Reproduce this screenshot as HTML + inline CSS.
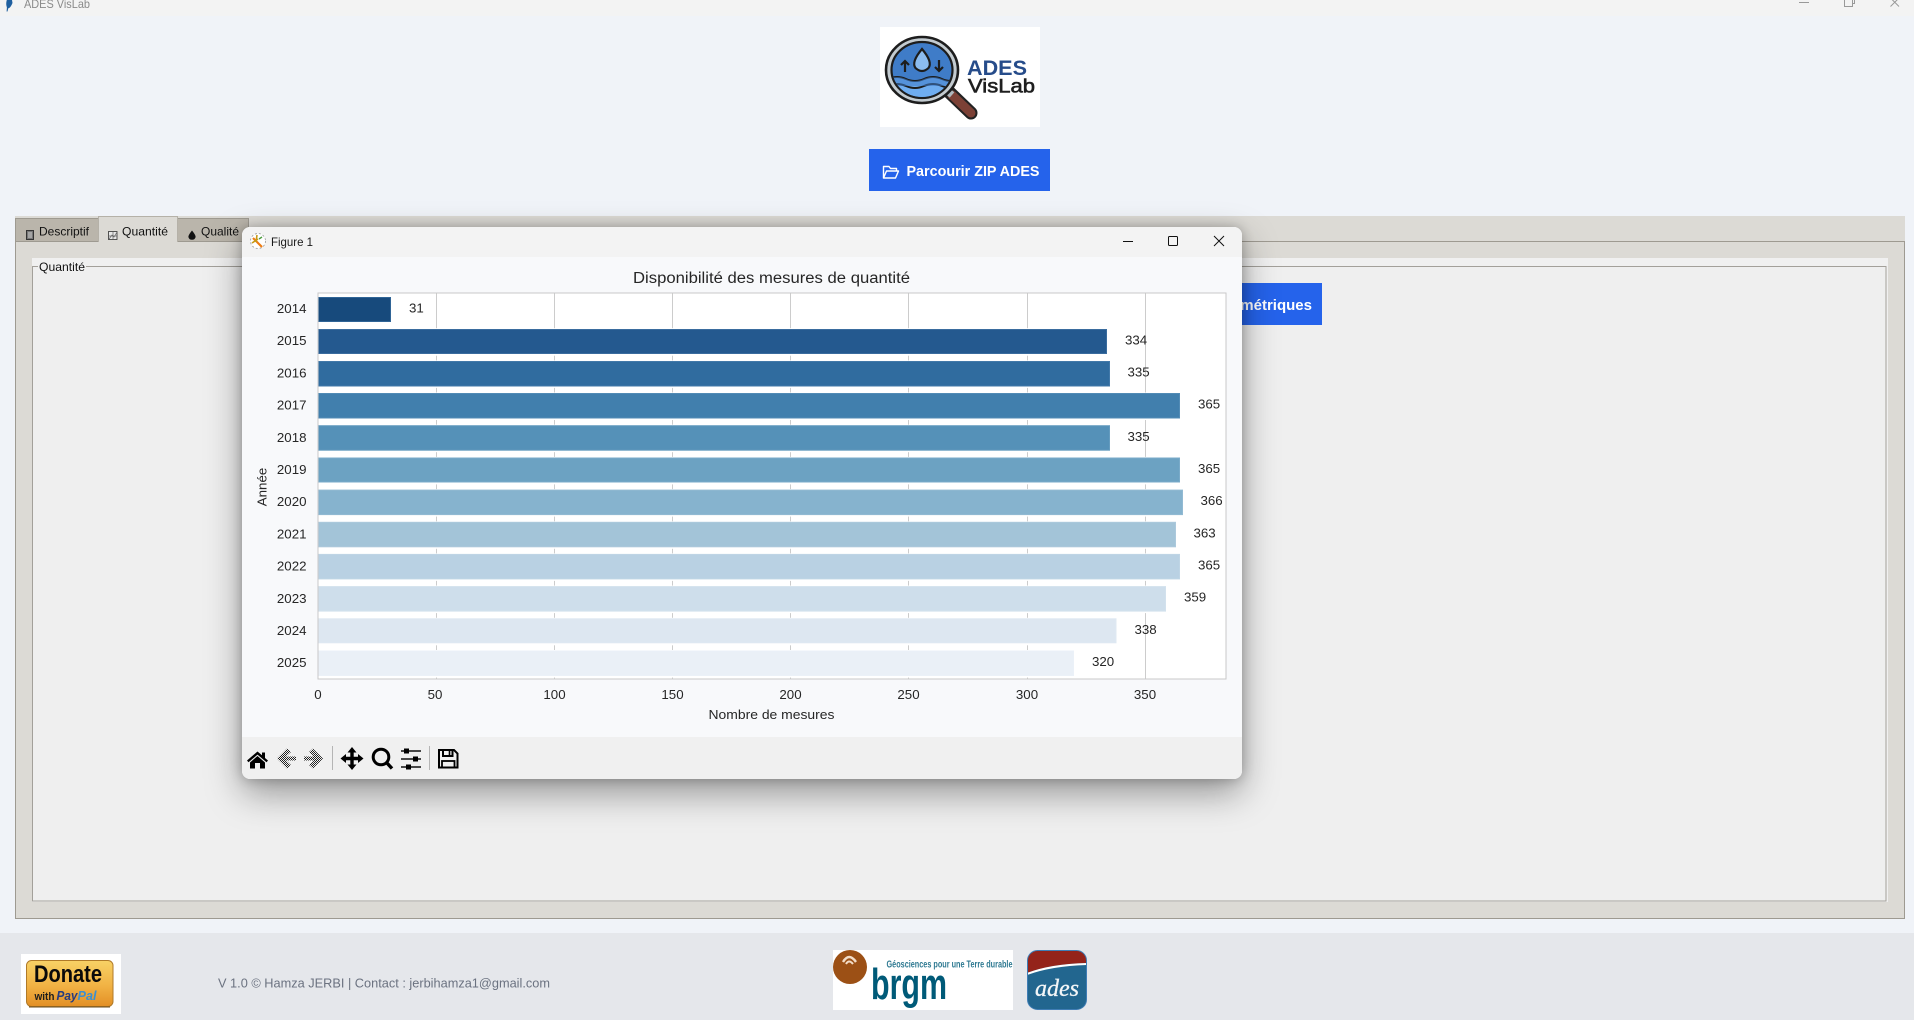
<!DOCTYPE html>
<html lang="fr">
<head>
<meta charset="utf-8">
<title>ADES VisLab</title>
<style>
html,body{margin:0;padding:0;width:1914px;height:1020px;overflow:hidden;background:#f0f3f8;}
svg{position:absolute;left:0;top:0;display:block;}
text{font-family:"Liberation Sans",Arial,sans-serif;}
#win{position:absolute;left:242px;top:227px;width:1000px;height:552px;border-radius:8px;background:#f8f9fb;box-shadow:0 14px 36px rgba(0,0,0,.38),0 0 12px rgba(0,0,0,.24);overflow:hidden;}
#win svg{left:0;top:0;}
</style>
</head>
<body>
<svg width="1914" height="1020" viewBox="0 0 1914 1020">
  <rect width="1914" height="1020" fill="#f0f3f8"/>
  <!-- title bar -->
  <rect width="1914" height="16" fill="#f3f3f3"/>
  <path d="M12 0 L12.5 3 Q10.5 8 8.3 8.3 L7.5 11.5 L6.6 11.5 L6.9 7.5 Q5.6 4 6.8 0Z" fill="#1f5f9f"/>
  <text x="24" y="8" font-size="12" fill="#8a8a8a" textLength="66" lengthAdjust="spacingAndGlyphs">ADES VisLab</text>
  <path d="M1799 2.5H1809" stroke="#999" stroke-width="1"/>
  <path d="M1844.5 -2V6.5H1852.5V-2M1852.5 3.5H1854.5V-3" fill="none" stroke="#999" stroke-width="1"/>
  <path d="M1890.5 -2L1899 6.5M1899 -2L1890.5 6.5" fill="none" stroke="#999" stroke-width="1"/>

  <!-- logo -->
  <rect x="880" y="27" width="160" height="100" fill="#fff"/>
  <path d="M948 91L971 113" stroke="#222" stroke-width="13" stroke-linecap="round"/>
  <path d="M952 95L971 113" stroke="#7c4136" stroke-width="9" stroke-linecap="round"/>
  <path d="M944 88L952 95" stroke="#aeb8bd" stroke-width="7"/>
  <ellipse cx="922" cy="70" rx="36" ry="33" fill="#c3cbd0" stroke="#1d1d1d" stroke-width="2.6"/>
  <ellipse cx="922" cy="70" rx="30.5" ry="28" fill="#3f7cc8" stroke="#1d1d1d" stroke-width="2.2"/>
  <clipPath id="lens"><ellipse cx="922" cy="70" rx="29.4" ry="27"/></clipPath>
  <g clip-path="url(#lens)">
    <path d="M888 79Q897 75 906 79T924 79T942 79T960 79V100H888Z" fill="#6fadf0" stroke="#1d1d1d" stroke-width="2"/>
    <path d="M888 86Q897 82 906 86T924 86T942 86T960 86" fill="none" stroke="#1d1d1d" stroke-width="2"/>
    <path d="M888 79Q897 75 906 79T924 79T942 79T960 79V86H888Z" fill="#3f7cc8" opacity=".55"/>
  </g>
  <path d="M922 49Q933 62 928.5 68Q922 74 915.5 68Q911 62 922 49Z" fill="#8bbcf0" stroke="#1d1d1d" stroke-width="2.2"/>
  <path d="M905 72V61M901 65L905 61L909 65" fill="none" stroke="#1d1d1d" stroke-width="2.2"/>
  <path d="M939 60V71M935 67L939 71L943 67" fill="none" stroke="#1d1d1d" stroke-width="2.2"/>
  <text x="967" y="75" font-size="21" font-weight="700" fill="#264c8a" textLength="60" lengthAdjust="spacingAndGlyphs">ADES</text>
  <text x="968" y="92.5" font-size="19" fill="#1f1f1f" font-weight="400" stroke="#1f1f1f" stroke-width=".6" textLength="67" lengthAdjust="spacingAndGlyphs">VisLab</text>

  <!-- main button -->
  <rect x="869" y="149" width="181" height="42" fill="#2563eb"/>
  <path d="M883.5 178V166.5H889L890.5 168.5H896.5V171M883.5 178H895.5L898.5 171H886.5Z" fill="none" stroke="#fff" stroke-width="1.4" stroke-linejoin="round"/>
  <text x="906.5" y="176" font-size="15" font-weight="700" fill="#fff" textLength="133" lengthAdjust="spacingAndGlyphs">Parcourir ZIP ADES</text>

  <!-- notebook -->
  <rect x="15" y="216" width="1890" height="703" fill="#dcdad5"/>
  <path d="M15.5 242V918.5H1904.5V241.5H178" fill="none" stroke="#9e9a91" stroke-width="1"/>
  <!-- tabs -->
  <rect x="15.5" y="218.5" width="83" height="23" fill="#bab5ab" stroke="#9e9a91"/>
  <rect x="177.5" y="218.5" width="71" height="23" fill="#bab5ab" stroke="#9e9a91"/>
  <path d="M98.5 242V216.5H177.5V242" fill="#dcdad5" stroke="#b5b1a8"/>
  <!-- tab icons -->
  <rect x="26.5" y="230.5" width="7" height="9" fill="#777" stroke="#333" stroke-width="1"/>
  <path d="M28 233H32M28 235H32M28 237H32" stroke="#eee" stroke-width=".8"/>
  <rect x="108.5" y="231.5" width="8.5" height="8" fill="#e8e8e8" stroke="#444" stroke-width=".9"/>
  <path d="M109 239L112 235L114 237L117 232M113 232V239M109 236H117" fill="none" stroke="#666" stroke-width=".7"/>
  <path d="M192 230.5Q196 235.5 195.6 237Q195 239.8 192 239.8Q189 239.8 188.4 237Q188 235.5 192 230.5Z" fill="#111"/>
  <text x="39" y="235.5" font-size="12" fill="#111" textLength="50" lengthAdjust="spacingAndGlyphs">Descriptif</text>
  <text x="122" y="235.5" font-size="12" fill="#111" textLength="46" lengthAdjust="spacingAndGlyphs">Quantité</text>
  <text x="201" y="235.5" font-size="12" fill="#111" textLength="38" lengthAdjust="spacingAndGlyphs">Qualité</text>
  <!-- labelframe -->
  <rect x="32" y="258" width="1856" height="644" fill="#f0f0f0"/>
  <rect x="32.5" y="266.5" width="1853.5" height="634.5" fill="#efefef" stroke="#a3a09a" stroke-width="1"/>
  <rect x="38" y="260" width="48" height="12" fill="#f0f0f0"/>
  <text x="39" y="271" font-size="12" fill="#111" textLength="46" lengthAdjust="spacingAndGlyphs">Quantité</text>
  <!-- hidden button -->
  <rect x="1100" y="283" width="222" height="42" fill="#2563eb"/>
  <text x="1312" y="310" font-size="15" font-weight="700" fill="#fff" text-anchor="end">métriques</text>

  <!-- footer -->
  <rect x="0" y="933" width="1914" height="87" fill="#e5e7eb"/>
  <rect x="21" y="954" width="100" height="60" fill="#fff"/>
  <defs>
    <linearGradient id="dg" x1="0" y1="0" x2="0" y2="1">
      <stop offset="0" stop-color="#f8d266"/><stop offset=".55" stop-color="#f1b244"/><stop offset="1" stop-color="#e38f25"/>
    </linearGradient>
  </defs>
  <rect x="26.5" y="960.5" width="86.5" height="46" rx="5" fill="url(#dg)" stroke="#b07a28"/>
  <path d="M29 1007H110" stroke="#6a4a18" stroke-width="1"/>
  <text x="34" y="982" font-size="24" font-weight="700" fill="#0a0a0a" textLength="68" lengthAdjust="spacingAndGlyphs">Donate</text>
  <text x="34.5" y="1000" font-size="11" font-weight="700" fill="#1c1c1c" textLength="20" lengthAdjust="spacingAndGlyphs">with</text>
  <text x="56.5" y="1000" font-size="13" font-weight="700" font-style="italic" fill="#253b80" textLength="21" lengthAdjust="spacingAndGlyphs">Pay</text>
  <text x="77.5" y="1000" font-size="13" font-weight="700" font-style="italic" fill="#3c8fd0" textLength="19" lengthAdjust="spacingAndGlyphs">Pal</text>
  <text x="218" y="987.5" font-size="13" fill="#6b7280" textLength="332" lengthAdjust="spacingAndGlyphs">V 1.0 © Hamza JERBI | Contact : jerbihamza1@gmail.com</text>
  <!-- brgm -->
  <rect x="833" y="950" width="180" height="60" fill="#fff"/>
  <circle cx="850" cy="967" r="17" fill="#9c5015"/>
  <path d="M843 962Q849 952 856 962" fill="none" stroke="#f3ddc8" stroke-width="2.4"/>
  <path d="M846 964Q849 959 853 964" fill="none" stroke="#f3ddc8" stroke-width="2"/>
  <text x="886.5" y="967.5" font-size="10" font-weight="700" fill="#2f7a92" textLength="126" lengthAdjust="spacingAndGlyphs">Géosciences pour une Terre durable</text>
  <text x="871" y="999" font-size="44" font-weight="700" fill="#005a78" textLength="76" lengthAdjust="spacingAndGlyphs">brgm</text>
  <!-- ades -->
  <clipPath id="ad"><rect x="1027.5" y="950.5" width="59" height="59" rx="10"/></clipPath>
  <g clip-path="url(#ad)">
    <rect x="1027" y="950" width="60" height="60" fill="#22668f"/>
    <path d="M1027 950H1087V963Q1050 964 1027 973Z" fill="#94231a"/>
    <path d="M1027 973Q1050 964 1087 963V965Q1052 966 1027 975Z" fill="#fff"/>
  </g>
  <rect x="1027.5" y="950.5" width="59" height="59" rx="10" fill="none" stroke="#3f7db5" stroke-width="1"/>
  <text x="1035" y="996" font-size="24" font-weight="400" font-style="italic" fill="#f2f5f7" stroke="#f2f5f7" stroke-width=".3" style="font-family:'Liberation Serif',serif" textLength="44" lengthAdjust="spacingAndGlyphs">ades</text>
</svg>

<div id="win">
<svg width="1000" height="552" viewBox="242 227 1000 552">
  <defs>
    <pattern id="dith" width="2" height="2" patternUnits="userSpaceOnUse">
      <rect width="2" height="2" fill="#f0f0f0"/>
      <rect width="1" height="1" fill="#222"/>
      <rect x="1" y="1" width="1" height="1" fill="#222"/>
    </pattern>
  </defs>
  <rect x="242" y="227" width="1000" height="30" fill="#f3f3f3"/>
  <rect x="242" y="257" width="1000" height="480" fill="#f8f9fb"/>
  <rect x="242" y="737" width="1000" height="42" fill="#f0f0f0"/>
  <!-- fig icon -->
  <circle cx="258" cy="241" r="7.5" fill="#fff" stroke="#999" stroke-width=".8" stroke-dasharray="2 2"/>
  <path d="M253 238L262 247" stroke="#ee7d14" stroke-width="2.2"/>
  <path d="M257 235L256 242M252 243L258 239" stroke="#c59a16" stroke-width="1.6"/>
  <path d="M259 239L262 237" stroke="#4a9c3c" stroke-width="1.4"/>
  <text x="271" y="246" font-size="12" fill="#1a1a1a" textLength="42" lengthAdjust="spacingAndGlyphs">Figure 1</text>
  <!-- caption -->
  <path d="M1123 241.5H1133" stroke="#111" stroke-width="1"/>
  <rect x="1168.5" y="236.5" width="9" height="9" rx="1" fill="none" stroke="#111" stroke-width="1"/>
  <path d="M1214 236L1224 246M1224 236L1214 246" stroke="#111" stroke-width="1"/>

  <!-- chart -->
  <text x="771.5" y="283" font-size="15.5" fill="#262626" text-anchor="middle" textLength="277" lengthAdjust="spacingAndGlyphs">Disponibilité des mesures de quantité</text>
  <rect x="318" y="293" width="908" height="386" fill="#fff"/>
  <g stroke="#cccccc" stroke-width="1">
    <path d="M436.5 293V679M554.5 293V679M672.5 293V679M790.5 293V679M908.5 293V679M1027.5 293V679M1145.5 293V679"/>
  </g>
  <g>
    <rect x="318" y="296" width="73" height="27.5" fill="#fff"/>
    <rect x="318" y="328.2" width="789" height="27.5" fill="#fff"/>
    <rect x="318" y="360.4" width="792" height="27.5" fill="#fff"/>
    <rect x="318" y="392.5" width="862" height="27.5" fill="#fff"/>
    <rect x="318" y="424.7" width="792" height="27.5" fill="#fff"/>
    <rect x="318" y="456.9" width="862" height="27.5" fill="#fff"/>
    <rect x="318" y="489.1" width="865" height="27.5" fill="#fff"/>
    <rect x="318" y="521.3" width="858" height="27.5" fill="#fff"/>
    <rect x="318" y="553.4" width="862" height="27.5" fill="#fff"/>
    <rect x="318" y="585.6" width="848" height="27.5" fill="#fff"/>
    <rect x="318" y="617.8" width="798.5" height="27.5" fill="#fff"/>
    <rect x="318" y="650" width="756" height="27.5" fill="#fff"/>
  </g>
  <g stroke-width="1">
    <rect x="318.5" y="297.5" width="72" height="24" fill="#174a7c" stroke="#2f6496"/>
    <rect x="318.5" y="329.5" width="788" height="24" fill="#24598f" stroke="#3a6c9e"/>
    <rect x="318.5" y="361.5" width="791" height="24.5" fill="#306c9f" stroke="#4279a9"/>
    <rect x="318.5" y="393.5" width="861" height="24.5" fill="#417fad" stroke="#528bb5"/>
    <rect x="318.5" y="425.7" width="791" height="24.5" fill="#5591b8" stroke="#659cbf"/>
    <rect x="318.5" y="458" width="861" height="24" fill="#6ca2c2" stroke="#7aabc9"/>
    <rect x="318.5" y="490.1" width="864" height="24.5" fill="#86b3ce" stroke="#92bad3"/>
    <rect x="318.5" y="522.3" width="857" height="24.5" fill="#a3c4d8" stroke="#acc9dc"/>
    <rect x="318.5" y="554.4" width="861" height="24.5" fill="#b9d1e3" stroke="#bfd5e5"/>
    <rect x="318.5" y="586.6" width="847" height="24.5" fill="#cedeeb" stroke="#d2e1ed"/>
    <rect x="318.5" y="618.8" width="797.5" height="24" fill="#dde7f1" stroke="#dfe8f2"/>
    <rect x="318.5" y="651" width="755" height="24.5" fill="#eaf0f7" stroke="#ebf1f8"/>
  </g>
  <rect x="318" y="293" width="908" height="386" fill="none" stroke="#c8c8c8" stroke-width="1"/>
  <g font-size="13.3" fill="#262626">
    <text x="409" y="312.5">31</text>
    <text x="1125" y="344.3">334</text>
    <text x="1127.5" y="376.5">335</text>
    <text x="1198" y="408.6">365</text>
    <text x="1127.5" y="440.8">335</text>
    <text x="1198" y="473">365</text>
    <text x="1200.5" y="505.2">366</text>
    <text x="1193.5" y="537.3">363</text>
    <text x="1198" y="569.5">365</text>
    <text x="1184" y="601.7">359</text>
    <text x="1134.5" y="633.8">338</text>
    <text x="1092" y="666.2">320</text>
  </g>
  <g font-size="13.3" fill="#262626" text-anchor="end">
    <text x="306.5" y="313">2014</text>
    <text x="306.5" y="345.2">2015</text>
    <text x="306.5" y="377.4">2016</text>
    <text x="306.5" y="409.6">2017</text>
    <text x="306.5" y="441.8">2018</text>
    <text x="306.5" y="474">2019</text>
    <text x="306.5" y="506.2">2020</text>
    <text x="306.5" y="538.4">2021</text>
    <text x="306.5" y="570.6">2022</text>
    <text x="306.5" y="602.8">2023</text>
    <text x="306.5" y="635">2024</text>
    <text x="306.5" y="667.2">2025</text>
  </g>
  <g font-size="13.3" fill="#262626" text-anchor="middle">
    <text x="318" y="699">0</text>
    <text x="435" y="699">50</text>
    <text x="554.5" y="699">100</text>
    <text x="672.5" y="699">150</text>
    <text x="790.5" y="699">200</text>
    <text x="908.5" y="699">250</text>
    <text x="1027" y="699">300</text>
    <text x="1145" y="699">350</text>
    <text x="771.5" y="719" textLength="126" lengthAdjust="spacingAndGlyphs">Nombre de mesures</text>
    <text transform="translate(266.5,487) rotate(-90)">Année</text>
  </g>

  <!-- toolbar -->
  <path d="M247 760.5L257.5 751.5L262 755.3V752.5H265V758L268 760.5L266.5 762.3L257.5 754.6L248.5 762.3Z" fill="#000"/>
  <path d="M250 762.5L257.5 756L265 762.5V768.5H260V763H255V768.5H250Z" fill="#000"/>
  <path d="M277 758.5L287 748.5L291 752L286 756.5H296V760.5H286L291 765L287 768.5Z" fill="url(#dith)"/>
  <path d="M323 758.5L313 748.5L309 752L314 756.5H304V760.5H314L309 765L313 768.5Z" fill="url(#dith)"/>
  <path d="M332.5 746V770M429.5 746V770" stroke="#b5b5b5" stroke-width="1"/>
  <path d="M352 747L356.5 752.5H353.7V756.8H358V754L363.5 758.5L358 763V760.2H353.7V764.5H356.5L352 770L347.5 764.5H350.3V760.2H346V763L340.5 758.5L346 754V756.8H350.3V752.5H347.5Z" fill="#000"/>
  <circle cx="381" cy="757" r="7.8" fill="none" stroke="#000" stroke-width="3"/>
  <path d="M386.5 762.5L392 768.5" stroke="#000" stroke-width="3.4"/>
  <path d="M401 751H421M401 759H421M401 767H421" stroke="#111" stroke-width="1.5"/>
  <rect x="404" y="748.5" width="5" height="5" fill="#000"/>
  <rect x="413" y="756.5" width="5" height="5" fill="#000"/>
  <rect x="406" y="764.5" width="5" height="5" fill="#000"/>
  <path d="M439 750H454L457.5 753.5V767.5H439Z" fill="none" stroke="#000" stroke-width="2"/>
  <path d="M443 750V756H452.5V750" fill="none" stroke="#000" stroke-width="2"/>
  <rect x="442" y="761" width="12.5" height="6.5" fill="none" stroke="#000" stroke-width="1.8"/>
  <path d="M449.5 751V755" stroke="#000" stroke-width="1.6"/>
</svg>
</div>
</body>
</html>
